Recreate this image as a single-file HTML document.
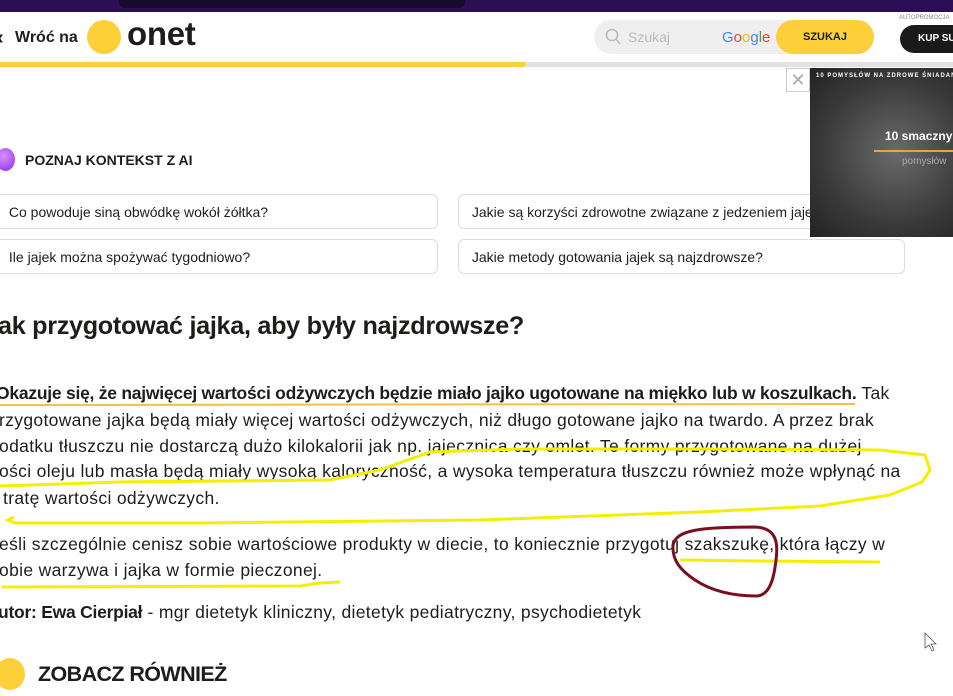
<!DOCTYPE html>
<html><head><meta charset="utf-8"><style>
*{margin:0;padding:0;box-sizing:border-box}
body{width:953px;height:696px;overflow:hidden;background:#fff;position:relative;font-family:"Liberation Sans",sans-serif;color:#1d1d1b}
.a{position:absolute;white-space:nowrap}
.t{font-size:17.5px;letter-spacing:0.33px}
.t b{letter-spacing:-0.25px}
.box{position:absolute;border:1px solid #dcdcdc;border-radius:6px;height:35px;font-size:14px;padding:9px 0 0 9px;white-space:nowrap;overflow:hidden}
</style></head><body>
<div class="a" style="left:0;top:0;width:953px;height:12px;background:#2a0f55"></div>
<div class="a" style="left:119px;top:0;width:346px;height:8px;background:#180a2a;border-radius:0 0 6px 6px"></div>
<div class="a" style="left:-3px;top:27px;font-size:20px;font-weight:bold">‹</div>
<div class="a" style="left:15px;top:29px;font-size:16px;font-weight:bold">Wróć na</div>
<div class="a" style="left:87px;top:20px;width:34px;height:34px;border-radius:50%;background:#fdd03a"></div>
<div class="a" style="left:127px;top:15px;font-size:33px;font-weight:bold;letter-spacing:-0.3px">onet</div>
<div class="a" style="left:594px;top:20px;width:280px;height:34px;border-radius:17px;background:#efefef"></div>
<svg class="a" style="left:605px;top:28px" width="16" height="18"><circle cx="7" cy="7" r="5.5" fill="none" stroke="#bbb" stroke-width="1.6"/><line x1="11" y1="11" x2="15" y2="16" stroke="#bbb" stroke-width="1.6"/></svg>
<div class="a" style="left:628px;top:29px;font-size:14px;color:#bbb">Szukaj</div>
<div class="a" style="left:722px;top:29px;font-size:15px;"><span style="color:#4285f4">G</span><span style="color:#ea4335">o</span><span style="color:#fbbc05">o</span><span style="color:#4285f4">g</span><span style="color:#34a853">l</span><span style="color:#ea4335">e</span></div>
<div class="a" style="left:776px;top:20px;width:98px;height:34px;border-radius:17px;background:#fdd03a;font-size:11px;font-weight:bold;text-align:center;line-height:34px">SZUKAJ</div>
<div class="a" style="left:899px;top:15px;font-size:6px;color:#888">AUTOPROMOCJA</div>
<div class="a" style="left:900px;top:25px;width:70px;height:28px;border-radius:14px;background:#1a1a1a;color:#fff;font-size:10px;font-weight:bold;line-height:28px;padding-left:18px">KUP SUB</div>
<div class="a" style="left:0;top:62px;width:953px;height:5px;background:#e2e2e2"></div>
<div class="a" style="left:0;top:62px;width:525px;height:5px;background:#fdd03a"></div>
<div class="box" style="left:-5px;top:194px;width:443px">&nbsp;Co powoduje siną obwódkę wokół żółtka?</div>
<div class="box" style="left:-5px;top:239px;width:443px">&nbsp;Ile jajek można spożywać tygodniowo?</div>
<div class="box" style="left:458px;top:194px;width:447px">&nbsp;Jakie są korzyści zdrowotne związane z jedzeniem jajek?</div>
<div class="box" style="left:458px;top:239px;width:447px">&nbsp;Jakie metody gotowania jajek są najzdrowsze?</div>
<div class="a" style="left:786px;top:68px;width:24px;height:24px;border:1px solid #ccc;color:#aaa;font-size:18px;text-align:center;line-height:22px;background:#fff">✕</div>
<div class="a" style="left:810px;top:68px;width:143px;height:169px;background:radial-gradient(ellipse at 60% 50%,#6a6a6a,#3a3a3a 60%,#222)"></div>
<div class="a" style="left:816px;top:73px;font-size:6px;color:#fff;font-weight:bold;letter-spacing:1px">10 POMYSŁÓW NA ZDROWE ŚNIADANIE</div>
<div class="a" style="left:885px;top:129px;font-size:12px;color:#fff;font-weight:bold">10 smaczny</div>
<div class="a" style="left:874px;top:150px;width:79px;height:2px;background:#e0a83c"></div>
<div class="a" style="left:902px;top:156px;font-size:10px;color:#aaa">pomysłów</div>
<div class="a" style="left:-4px;top:148px;width:19px;height:23px;border-radius:50%;background:radial-gradient(circle at 40% 35%,#d890ff,#8a2be2)"></div>
<div class="a" style="left:25px;top:152px;font-size:14px;font-weight:bold">POZNAJ KONTEKST Z AI</div>
<div class="a" style="left:-2px;top:312px;font-size:25.2px;font-weight:bold;letter-spacing:-0.3px">ak przygotować jajka, aby były najzdrowsze?</div>
<div class="a t" style="left:-4px;top:383px"><b>Okazuje się, że najwięcej wartości odżywczych będzie miało jajko ugotowane na miękko lub w koszulkach.</b> Tak</div>
<div class="a t" style="left:-1px;top:410px">rzygotowane jajka będą miały więcej wartości odżywczych, niż długo gotowane jajko na twardo. A przez brak</div>
<div class="a t" style="left:-1px;top:436px">odatku tłuszczu nie dostarczą dużo kilokalorii jak np. jajecznica czy omlet. Te formy przygotowane na dużej</div>
<div class="a t" style="left:-1px;top:461px">ości oleju lub masła będą miały wysoką kaloryczność, a wysoka temperatura tłuszczu również może wpłynąć na</div>
<div class="a t" style="left:3px;top:488px">tratę wartości odżywczych.</div>
<div class="a t" style="left:-1px;top:534px">eśli szczególnie cenisz sobie wartościowe produkty w diecie, to koniecznie przygotuj szakszukę, która łączy w</div>
<div class="a t" style="left:-1px;top:560px">obie warzywa i jajka w formie pieczonej.</div>
<div class="a t" style="left:-2px;top:602px"><b>utor: Ewa Cierpiał</b> - mgr dietetyk kliniczny, dietetyk pediatryczny, psychodietetyk</div>
<div class="a" style="left:-5px;top:658px;width:30px;height:32px;border-radius:50%;background:#fdd03a"></div>
<div class="a" style="left:38px;top:662px;font-size:21.5px;font-weight:bold;letter-spacing:-0.6px">ZOBACZ RÓWNIEŻ</div>
<svg class="a" style="left:0;top:0" width="953" height="696">
<path d="M0 405 L855 404" stroke="#f5c040" stroke-width="2" fill="none"/>
<path d="M0 486 L120 482 L330 480 L380 470 L430 452 L520 449 L700 449 L880 450 L925 455 L930 470 L922 482 L890 495 L820 506 L700 512 L480 520 L200 523 L15 523 L8 520 L14 517" stroke="#f5ee00" stroke-width="3" fill="none"/>
<path d="M680 560 L760 561 L880 562" stroke="#f5ee00" stroke-width="3" fill="none"/>
<path d="M2 587 L300 586 L320 583 L340 582" stroke="#f5ee00" stroke-width="3" fill="none"/>
<path d="M673 545 C676 530 700 527 755 527 C778 528 778 545 776 560 C774 578 770 595 757 596 C730 596 710 590 695 580 C680 570 672 560 673 545 Z" stroke="#7a0f1f" stroke-width="3" fill="none"/>
<path d="M925 633 L925 648 L929 645 L932 651 L934 650 L931 644 L936 644 Z" fill="#fff" stroke="#555" stroke-width="0.8"/>
</svg>
</body></html>
